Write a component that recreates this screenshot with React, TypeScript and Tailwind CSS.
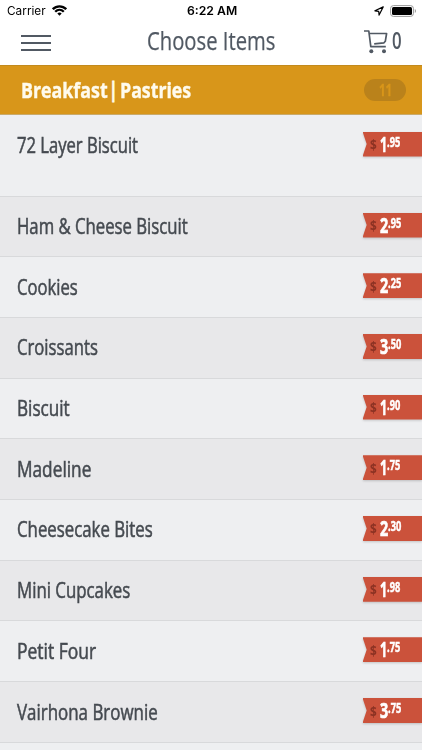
import { useLayoutEffect, useRef, useState } from "react";

// Condenses a line of text horizontally to the given advance width.
function Condensed({ text, width, className = "" }: { text: string; width: number; className?: string }) {
  const ref = useRef<HTMLSpanElement>(null);
  const [scale, setScale] = useState(0.8);
  useLayoutEffect(() => {
    const measure = () => {
      if (ref.current) setScale(width / ref.current.offsetWidth);
    };
    measure();
    document.fonts?.ready.then(measure);
  }, [text, width]);
  return (
    <span className="flex shrink-0 items-start whitespace-nowrap" style={{ width }}>
      <span ref={ref} className={`shrink-0 origin-left ${className}`} style={{ transform: `scaleX(${scale})` }}>
        {text}
      </span>
    </span>
  );
}

const items = [
  { name: "72 Layer Biscuit", width: 121, whole: "1", cents: ".95" },
  { name: "Ham & Cheese Biscuit", width: 170.5, whole: "2", cents: ".95" },
  { name: "Cookies", width: 61, whole: "2", cents: ".25" },
  { name: "Croissants", width: 81, whole: "3", cents: ".50" },
  { name: "Biscuit", width: 53, whole: "1", cents: ".90" },
  { name: "Madeline", width: 74, whole: "1", cents: ".75" },
  { name: "Cheesecake Bites", width: 136, whole: "2", cents: ".30" },
  { name: "Mini Cupcakes", width: 113, whole: "1", cents: ".98" },
  { name: "Petit Four", width: 79, whole: "1", cents: ".75" },
  { name: "Vairhona Brownie", width: 141, whole: "3", cents: ".75" },
];

function PriceTag({ whole, cents }: { whole: string; cents: string }) {
  const narrow = whole === "1";
  return (
    <div className="h-[25px] w-[59.5px] drop-shadow-[0_1px_1px_rgba(0,0,0,0.18)]">
      <div className="flex h-[25px] items-start bg-[#cb523b] pl-[7.5px] font-bold [clip-path:polygon(0_0,100%_0,100%_100%,0_100%,7%_50%)]">
        <Condensed text="$" width={7} className="pt-[6.5px] text-[13.5px] leading-[14px] text-[#8c3223]" />
        <div className="ml-[2.5px] flex items-start">
          <Condensed
            text={whole}
            width={narrow ? 7 : 8}
            className="pt-[2px] text-[21.5px] leading-[20px] text-white [-webkit-text-stroke:0.7px_white]"
          />
          <Condensed
            text={cents}
            width={13}
            className="pt-[3px] text-[13.5px] leading-[14px] text-white [-webkit-text-stroke:0.5px_white]"
          />
        </div>
      </div>
    </div>
  );
}

export default function App() {
  return (
    <div className="h-[750px] w-[422px] overflow-hidden bg-[#eeeff1] font-['Open_Sans','Noto_Sans',sans-serif]">
      <div className="flex h-[22px] items-center bg-white px-[7px] font-['Inter',sans-serif] text-black">
        <div className="flex flex-1 items-center gap-[6px] pt-[1px]">
          <Condensed text="Carrier" width={39} className="text-[11.5px]" />
          <svg className="-mt-[2px]" width="15" height="11" viewBox="0 0 15 11" fill="none" stroke="black" strokeWidth="2.3">
            <path d="M.8 4.2C4.6.3 10.4.3 14.2 4.2" />
            <path d="M3.2 6.8c2.5-2.5 6.1-2.5 8.6 0" />
            <path d="M7.5 10.7 5.3 8.5c1.3-1.2 3.1-1.2 4.4 0z" fill="black" stroke="none" />
          </svg>
        </div>
        <div className="ml-[2px] pt-[1px]">
          <Condensed text="6:22 AM" width={50} className="text-[11.5px] font-semibold" />
        </div>
        <div className="flex flex-1 items-center justify-end gap-[6px] pb-[1px]">
          <svg width="10" height="10" viewBox="0 0 10 10" fill="none" stroke="black" strokeWidth="1.2" strokeLinejoin="round">
            <path d="M9.2.9.9 4.8l3.8.5.4 3.8z" />
          </svg>
          <svg className="-mr-[2px]" width="27" height="12" viewBox="0 0 27 12">
            <rect x=".6" y=".6" width="22.8" height="10.8" rx="2.8" fill="none" stroke="#999" strokeWidth="1" />
            <rect x="2" y="2" width="20" height="8" rx="1.5" fill="black" />
            <path d="M24.8 4v4c1.6-.7 1.6-3.3 0-4z" fill="#999" />
          </svg>
        </div>
      </div>

      <header className="flex h-[43px] items-start bg-white text-[#515963]">
        <div className="ml-[21px] mt-[13px] flex w-[30px] flex-col gap-[5px]">
          <span className="h-[2px] bg-[#515963]" />
          <span className="h-[2px] bg-[#515963]" />
          <span className="h-[2px] bg-[#515963]" />
        </div>
        <div className="ml-[95.5px]">
          <Condensed text="Choose Items" width={128.5} className="text-[26px] leading-[36px] [-webkit-text-stroke:0.25px_#515963]" />
        </div>
        <div className="ml-[89px] mt-[7px] flex">
          <svg width="25" height="25" viewBox="0 0 25 25" fill="none" stroke="#515963" strokeWidth="1.7" strokeLinejoin="round">
            <path d="M0 2h4.8l2 15.6h15" />
            <path d="M5.3 4.5h17.3l-1.3 7.8-1.3 1.5-9.8 1.1" />
            <circle cx="7.3" cy="22.2" r="2" fill="#515963" stroke="none" />
            <circle cx="20" cy="22.2" r="2" fill="#515963" stroke="none" />
          </svg>
          <div className="ml-[2.5px]">
            <Condensed text="0" width={9.5} className="text-[23px] font-semibold leading-[23px]" />
          </div>
        </div>
      </header>

      <div className="flex h-[49.5px] items-center justify-between border-b border-t border-b-[#c9aa6b] border-t-[#c28a1d] bg-[#d8961a] pl-[20.5px] pr-4">
        <div className="flex text-[21px] font-bold leading-[28px] text-[#fffbed]">
          <Condensed text="Breakfast" width={86.5} className="[-webkit-text-stroke:0.4px_#fffbed]" />
          <div className="ml-[1.5px]">
            <Condensed text="|" width={9} className="-translate-y-[1px] [-webkit-text-stroke:0.8px_#fffbed]" />
          </div>
          <div className="ml-[2px]">
            <Condensed text="Pastries" width={71} className="[-webkit-text-stroke:0.4px_#fffbed]" />
          </div>
        </div>
        <div className="flex h-[22px] w-[42px] items-center justify-center rounded-full bg-[#ba821b]">
          <Condensed text="11" width={13} className="text-[16px] font-bold leading-[22px] text-[#d8961a] [-webkit-text-stroke:0.3px_#d8961a]" />
        </div>
      </div>

      {items.map((item, i) => (
        <div
          key={item.name}
          className={`flex items-start justify-between border-b border-[#d8d9db] pl-[16.5px] ${
            i === 0 ? "h-[82px] pt-[17px]" : "h-[60.7px] pt-[16px]"
          } ${i % 2 ? "bg-[#e8e8ea]" : "bg-[#eeeff1]"}`}
        >
          <div className="-mt-[0.5px]">
            <Condensed
              text={item.name}
              width={item.width}
              className="text-[21px] leading-[28px] text-[#454a50] [-webkit-text-stroke:0.55px_#454a50]"
            />
          </div>
          <PriceTag whole={item.whole} cents={item.cents} />
        </div>
      ))}
    </div>
  );
}
